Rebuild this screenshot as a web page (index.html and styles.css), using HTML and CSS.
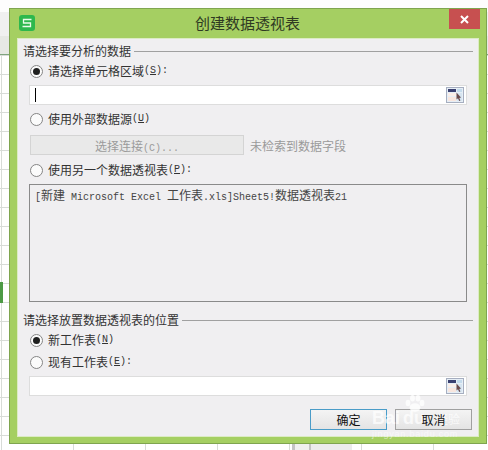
FILE: index.html
```html
<!DOCTYPE html>
<html lang="zh-CN">
<head>
  <meta charset="UTF-8">
  <meta name="viewport" content="width=device-width, initial-scale=1.0">
  <title>创建数据透视表</title>
  <link rel="stylesheet" href="styles.css">
</head>
<body>
  <div class="cell-mark"></div>
  <div class="cell-block"></div>
  <div class="dialog">
    <div class="titlebar">
      <svg class="app-logo" width="16" height="16" viewBox="0 0 16 16">
        <rect width="16" height="16" rx="3" fill="#2db84d"/>
        <path d="M12.5 4.5H4.5V8H11.5V11.5H3.5" fill="none" stroke="#eafbe9" stroke-width="1.3"/>
      </svg>
      <div class="title">创建数据透视表</div>
      <div class="close">
        <svg width="9" height="9" viewBox="0 0 9 9"><path d="M1 1L8 8M8 1L1 8" stroke="#fff" stroke-width="2"/></svg>
      </div>
    </div>
    <div class="client">
      <div class="legend"><span>请选择要分析的数据</span><i></i></div>
      <label class="radio-row first-row"><span class="radio checked"></span>请选择单元格区域<span class="key">(<u>S</u>):</span></label>
      <div class="field field-a">
        <span class="caret"></span>
        <svg class="pick" width="18" height="16" viewBox="0 0 18 16">
          <rect x="0.5" y="0.5" width="17" height="15" fill="#e6eef6" stroke="#a6aec0"/>
          <rect x="2" y="2" width="8" height="3" fill="#3a4070"/>
          <rect x="11" y="2" width="5" height="3" fill="#c4dbec"/>
          <rect x="2" y="6" width="8" height="3" fill="#fbeee8"/>
          <rect x="2" y="10" width="8" height="4" fill="#f8e6de"/>
          <rect x="11" y="6" width="5" height="8" fill="#d5e4f0"/>
          <path d="M10.5 5.5L10.5 12.5L12 11.3L13.2 14L14.4 13.5L13.3 10.9L15 10.6Z" fill="#6b4a4c"/>
        </svg>
      </div>
      <label class="radio-row row-b"><span class="radio"></span>使用外部数据源<span class="key">(<u>U</u>)</span></label>
      <div class="connect-row">
        <button class="connect" disabled>选择连接<span class="key">(C)...</span></button>
        <span class="no-data">未检索到数据字段</span>
      </div>
      <label class="radio-row row-c"><span class="radio"></span>使用另一个数据透视表<span class="key">(<u>P</u>):</span></label>
      <div class="pivot-box"><span class="key">[</span>新建<span class="key"> Microsoft Excel </span>工作表<span class="key">.xls]Sheet5!</span>数据透视表<span class="key">21</span></div>

      <div class="legend legend-b"><span>请选择放置数据透视表的位置</span><i></i></div>
      <label class="radio-row first-row"><span class="radio checked"></span>新工作表<span class="key">(<u>N</u>)</span></label>
      <label class="radio-row row-e"><span class="radio"></span>现有工作表<span class="key">(<u>E</u>):</span></label>
      <div class="field field-b">
        <svg class="pick" width="18" height="16" viewBox="0 0 18 16">
          <rect x="0.5" y="0.5" width="17" height="15" fill="#e6eef6" stroke="#a6aec0"/>
          <rect x="2" y="2" width="8" height="3" fill="#3a4070"/>
          <rect x="11" y="2" width="5" height="3" fill="#c4dbec"/>
          <rect x="2" y="6" width="8" height="3" fill="#fbeee8"/>
          <rect x="2" y="10" width="8" height="4" fill="#f8e6de"/>
          <rect x="11" y="6" width="5" height="8" fill="#d5e4f0"/>
          <path d="M10.5 5.5L10.5 12.5L12 11.3L13.2 14L14.4 13.5L13.3 10.9L15 10.6Z" fill="#6b4a4c"/>
        </svg>
      </div>
      <div class="actions">
        <button class="btn btn-ok"><span class="btn-text">确定</span></button>
        <button class="btn"><span class="btn-text">取消</span></button>
      </div>
    </div>
  </div>
  <div class="watermark">
    <svg class="paw" width="20" height="17" viewBox="0 0 20 17">
      <ellipse cx="3" cy="8" rx="2.4" ry="3.2"/><ellipse cx="7.5" cy="3.2" rx="2.4" ry="3.2"/>
      <ellipse cx="13" cy="3.2" rx="2.4" ry="3.2"/><ellipse cx="17" cy="8" rx="2.4" ry="3.2"/>
      <ellipse cx="10" cy="12.5" rx="5.5" ry="4.2"/>
    </svg>
    <div class="wm-name">Bai<span class="wm-du">du</span><span class="wm-jy">经验</span></div>
    <div class="wm-url">jingyan.baidu.com</div>
  </div>
</body>
</html>
```
FILE: styles.css
```css
* {
  box-sizing: border-box;
}
html, body {
  height: 450px;
  overflow: hidden;
}
body {
  margin: 0;
  padding: 8px 0 0 9px;
  position: relative;
  font-family: "Noto Sans CJK SC", "Liberation Sans", sans-serif;
  font-size: 12px;
  color: #333;
  background-color: #fff;
  background-image:
    linear-gradient(#fdfdfd 12px, #f0f0f0 12px, #f0f0f0 36px, #e6e8e4 36px, #e6e8e4 54px, #7fa57f 54px, #7fa57f 55px, transparent 55px),
    repeating-linear-gradient(transparent 0, transparent 17px, #d8dcd8 17px, #d8dcd8 18px, transparent 18px, transparent 19px),
    repeating-linear-gradient(90deg, transparent 0, transparent 1px, #d8dcd8 1px, #d8dcd8 2px, transparent 2px, transparent 72px);
  background-size: 100% 55px, 100% 100%, 100% 100%;
  background-repeat: no-repeat;
}
.cell-mark {
  position: absolute;
  left: 0;
  top: 282px;
  width: 3px;
  height: 21px;
  background: #4d9a45;
}
.cell-block {
  position: absolute;
  left: 292px;
  top: 444px;
  width: 60px;
  height: 6px;
  background: linear-gradient(90deg, #c4c4c4 3px, #f0f0f0 3px, #f0f0f0 17px, #c4c4c4 17px, #c4c4c4 19px, #ececec 19px);
}
.dialog {
  position: relative;
  width: 478px;
  height: 436px;
  background: #a5cf62;
  border: 1px solid #7fa54f;
  display: flex;
  flex-direction: column;
}
.titlebar {
  height: 29px;
  display: flex;
  align-items: center;
  padding-left: 9px;
  position: relative;
  flex: none;
}
.app-logo {
  margin-top: -2px;
}
.title {
  position: absolute;
  left: 185px;
  top: 4px;
  font-size: 15px;
  line-height: 20px;
  color: #2f3a22;
}
.close {
  position: absolute;
  right: 6px;
  top: 0;
  width: 31px;
  height: 20px;
  background: #c75050;
  display: flex;
  align-items: center;
  justify-content: center;
}
.client {
  margin: 0 7px 0 7px;
  height: 399px;
  background: #f0eff1;
  border: 1px solid #dcebc4;
  padding: 4px 5px 0 5px;
}
.key {
  font-family: "Liberation Mono", monospace;
  font-size: 10px;
}
.legend {
  height: 16px;
  line-height: 16px;
  display: flex;
  align-items: center;
}
.legend i {
  flex: 1;
  height: 1px;
  background: #a0a0a0;
  margin-left: 3px;
}
.legend-b {
  margin-top: 10px;
}
.radio-row {
  height: 16px;
  line-height: 16px;
  display: flex;
  align-items: center;
  padding-left: 7px;
}
.first-row {
  margin-top: 4px;
}
.row-b {
  margin-top: 6px;
}
.row-c {
  margin-top: 7px;
}
.row-e {
  margin-top: 6px;
}
.radio {
  width: 13px;
  height: 13px;
  border-radius: 50%;
  border: 1px solid #858585;
  background: #fbfbfb;
  margin-right: 5px;
  flex: none;
  display: flex;
  align-items: center;
  justify-content: center;
}
.radio.checked::after {
  content: "";
  width: 7px;
  height: 7px;
  border-radius: 50%;
  background: #1f1f1f;
}
.field {
  height: 20px;
  margin: 6px 6px 0 6px;
  background: #fff;
  border: 1px solid #dddddd;
  display: flex;
  align-items: center;
  padding: 0 2px 0 5px;
}
.pick {
  margin-left: auto;
}
.caret {
  width: 1px;
  height: 14px;
  background: #000;
}
.connect-row {
  margin: 8px 0 0 7px;
  height: 20px;
  display: flex;
  align-items: center;
}
.connect {
  width: 214px;
  height: 20px;
  background: #e9e9e9;
  border: 1px solid #d4d4d4;
  color: #9b9b9b;
  font: inherit;
  padding: 0;
}
.no-data {
  margin-left: 6px;
  color: #9a9a9a;
}
.pivot-box {
  height: 118px;
  margin: 6px 6px 0 6px;
  border: 1px solid #8a8a8a;
  padding: 3px 5px;
  line-height: 14px;
  white-space: pre;
  color: #444;
}
.actions {
  margin: 13px 1px 0 0;
  display: flex;
  justify-content: flex-end;
  gap: 8px;
}
.btn {
  width: 77px;
  height: 21px;
  border: 1px solid #a0a0a0;
  background: linear-gradient(#f4f4f4, #e4e4e4);
  font: inherit;
  color: #111;
  padding: 0;
}
.btn-ok {
  border-color: #4a9cc8;
}
.btn-text {
  position: relative;
  z-index: 2;
}
.watermark {
  position: absolute;
  z-index: 1;
  left: 372px;
  top: 395px;
  width: 92px;
  color: rgba(255, 255, 255, 0.72);
  pointer-events: none;
}
.paw {
  display: block;
  margin-left: 33px;
  fill: rgba(255, 255, 255, 0.8);
}
.wm-name {
  font-family: "Liberation Sans", sans-serif;
  font-size: 18px;
  line-height: 20px;
  font-weight: bold;
  white-space: nowrap;
  margin-top: -4px;
}
.wm-du {
  margin-left: 3px;
}
.wm-jy {
  font-family: "Noto Sans CJK SC", sans-serif;
  font-size: 12px;
  font-weight: normal;
  margin-left: 11px;
}
.wm-url {
  font-family: "Liberation Sans", sans-serif;
  font-size: 9px;
  line-height: 10px;
  letter-spacing: 0.8px;
  white-space: nowrap;
  color: rgba(255, 255, 255, 0.55);
}
```
